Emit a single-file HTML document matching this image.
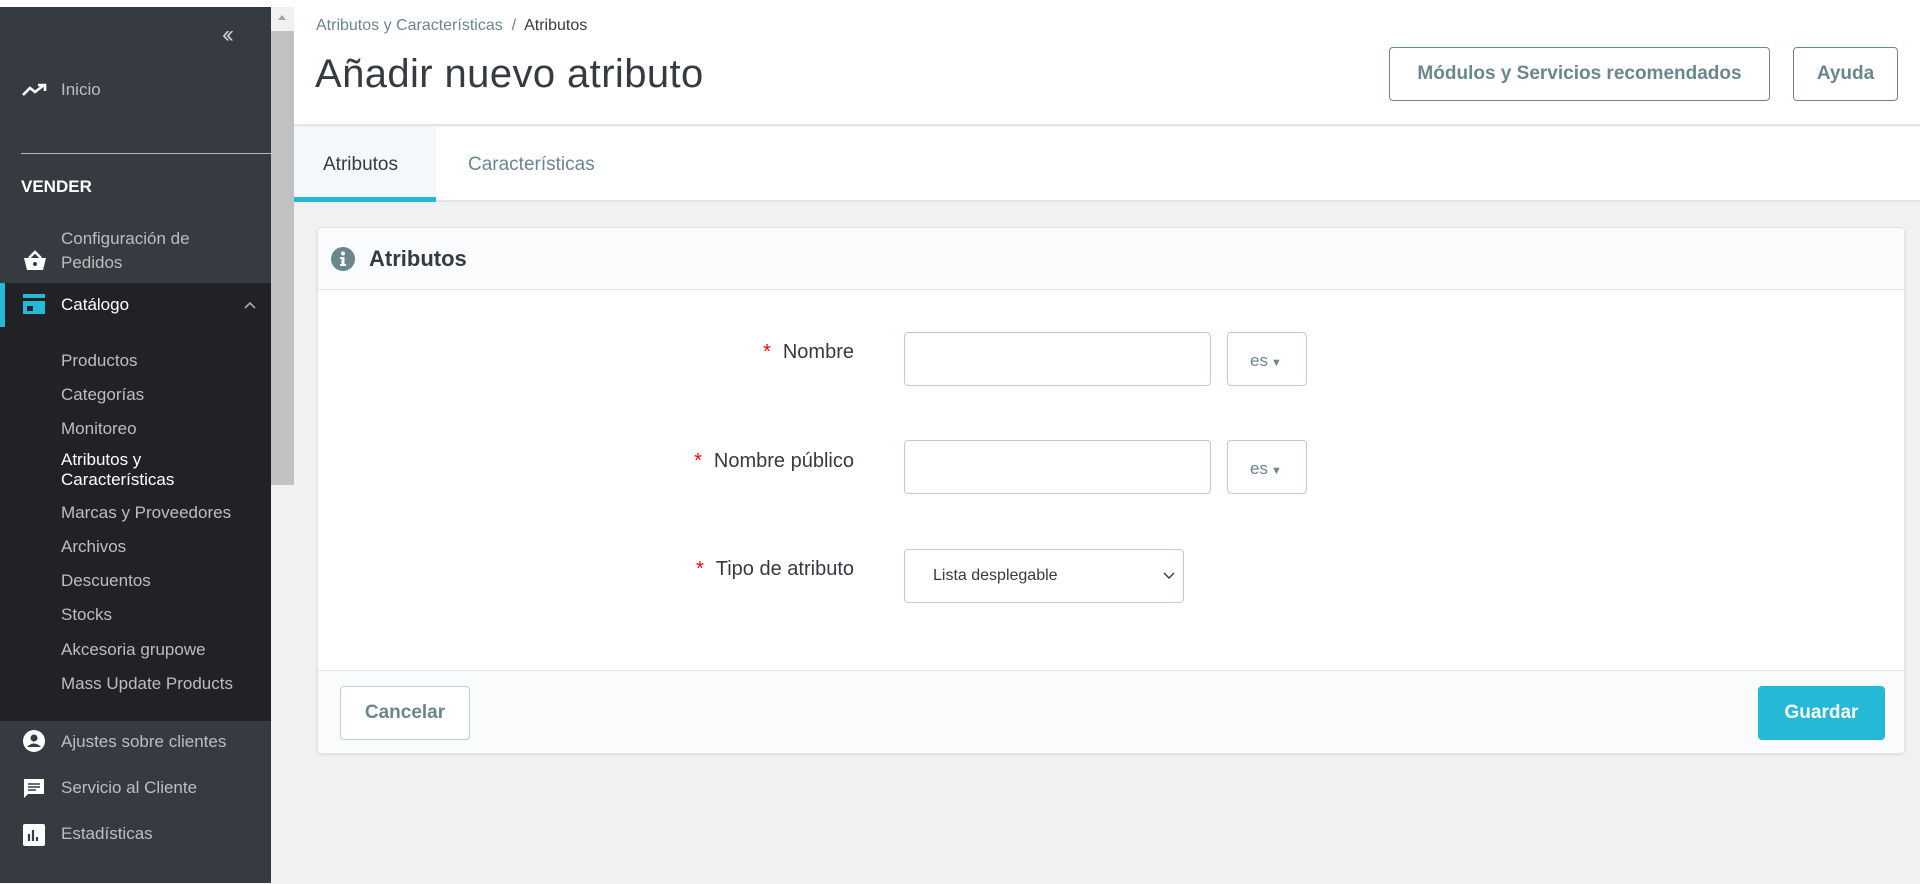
<!DOCTYPE html>
<html><head><meta charset="utf-8"><style>
*{box-sizing:border-box;margin:0;padding:0}
body{width:1920px;height:884px;overflow:hidden;background:#eff1f2;font-family:"Liberation Sans",sans-serif;position:relative}
.abs{position:absolute}
#sb{left:0;top:7px;width:271px;height:876px;background:#363a41;color:#bebebe;font-size:17px}
#sb .t{position:absolute;left:61px;white-space:nowrap}
#scroll{left:271px;top:7px;width:23px;height:877px;background:#f1f1f1}
#main{left:294px;top:0;width:1626px;height:884px}
.btn{position:absolute;border:1.5px solid #6c868e;border-radius:4px;color:#6c868e;font-size:19px;font-weight:bold;display:flex;align-items:center;justify-content:center;background:#fff;white-space:nowrap}
.inp{position:absolute;border:1.5px solid #bbcdd2;border-radius:4px;background:#fff}
.lbl{position:absolute;right:0;font-size:20px;color:#363a41;white-space:nowrap}
.lbl b{color:#f00;font-weight:normal;margin-right:12px}
</style></head><body>
<div class="abs" style="left:0;top:0;width:1920px;height:7px;background:#fff"></div>
<div class="abs" style="left:508px;top:-20px;width:343px;height:26px;border:1px solid #ccc;border-radius:13px;background:#fff"></div>
<div id="sb" class="abs">
 <div class="t" style="left:222px;top:14px;font-size:24px;color:#ccc;letter-spacing:-4px">‹‹</div>
 <svg class="abs" style="left:22px;top:76px" width="26" height="14" viewBox="0 0 26 14"><path d="M1 12 L8 5 L13 9 L22 2 M16 2 H23 V8" stroke="#fff" stroke-width="2.6" fill="none"/></svg>
 <div class="t" style="top:73px">Inicio</div>
 <div class="abs" style="left:21px;top:146px;width:250px;height:1px;background:#bbb"></div>
 <div class="t" style="left:21px;top:170px;color:#fff;font-weight:bold">VENDER</div>
 <div class="t" style="top:220px;line-height:24px">Configuración de<br>Pedidos</div>
 <svg class="abs" style="left:22px;top:243px" width="26" height="22" viewBox="0 0 26 22"><path d="M2 8 H24 L21 20 H5 Z" fill="#fff"/><path d="M7 8 L13 2 L19 8" stroke="#fff" stroke-width="2.5" fill="none"/><circle cx="13" cy="14" r="2" fill="#363a41"/></svg>
 <div class="abs" style="left:0;top:276px;width:271px;height:438px;background:#202226"></div>
 <div class="abs" style="left:0;top:276px;width:5px;height:44px;background:#25b9d7"></div>
 <svg class="abs" style="left:22px;top:286px" width="24" height="22" viewBox="0 0 24 22"><rect x="1" y="1" width="22" height="4" fill="#25b9d7"/><rect x="1" y="8" width="22" height="13" fill="#25b9d7"/><rect x="5" y="13" width="6" height="5" fill="#202226"/></svg>
 <div class="t" style="top:288px;color:#fff;font-size:17px">Catálogo</div>
 <svg class="abs" style="left:244px;top:294px" width="12" height="8" viewBox="0 0 12 8"><path d="M1 7 L6 2 L11 7" stroke="#aaa" stroke-width="1.6" fill="none"/></svg>
 <div class="t" style="top:344px">Productos</div>
 <div class="t" style="top:378px">Categorías</div>
 <div class="t" style="top:412px">Monitoreo</div>
 <div class="t" style="top:443px;color:#fff;line-height:20px">Atributos y<br>Características</div>
 <div class="t" style="top:496px">Marcas y Proveedores</div>
 <div class="t" style="top:530px">Archivos</div>
 <div class="t" style="top:564px">Descuentos</div>
 <div class="t" style="top:598px">Stocks</div>
 <div class="t" style="top:633px">Akcesoria grupowe</div>
 <div class="t" style="top:667px">Mass Update Products</div>
 <svg class="abs" style="left:22px;top:722px" width="24" height="24" viewBox="0 0 24 24"><circle cx="12" cy="12" r="11" fill="#fff"/><circle cx="12" cy="9" r="3.5" fill="#363a41"/><path d="M5 18 Q12 11 19 18" fill="#363a41"/></svg>
 <div class="t" style="top:725px">Ajustes sobre clientes</div>
 <svg class="abs" style="left:22px;top:770px" width="24" height="24" viewBox="0 0 24 24"><path d="M2 2 H22 V17 H6 L2 21 Z" fill="#fff"/><path d="M6 7 H18 M6 10 H18 M6 13 H14" stroke="#363a41" stroke-width="1.6"/></svg>
 <div class="t" style="top:771px">Servicio al Cliente</div>
 <svg class="abs" style="left:23px;top:817px" width="22" height="22" viewBox="0 0 22 22"><rect x="0" y="0" width="22" height="22" rx="2" fill="#fff"/><path d="M6 17 V10 M10 17 V6 M14 17 V13" stroke="#363a41" stroke-width="2.2"/></svg>
 <div class="t" style="top:817px">Estadísticas</div>
</div>
<div id="scroll" class="abs"><div class="abs" style="left:0;top:24px;width:23px;height:454px;background:#c1c1c1"></div><div class="abs" style="left:7px;top:8px;width:0;height:0;border:4px solid transparent;border-bottom:5px solid #a3a3a3;border-top:0"></div></div>
<div id="main" class="abs">
 <div class="abs" style="left:0;top:0;width:1626px;height:126px;background:#fff;border-bottom:2px solid #e4e6e8"></div>
 <div class="abs" style="left:22px;top:17px;font-size:16px;color:#6c868e">Atributos y Características &nbsp;/&nbsp; <span style="color:#363a41">Atributos</span></div>
 <div class="abs" style="left:21px;top:52px;font-size:40px;color:#363a41;letter-spacing:0.4px">Añadir nuevo atributo</div>
 <div class="btn" style="left:1095px;top:47px;width:381px;height:54px">Módulos y Servicios recomendados</div>
 <div class="btn" style="left:1499px;top:47px;width:105px;height:54px">Ayuda</div>
 <div class="abs" style="left:0;top:127px;width:1626px;height:75px;background:#fff;border-bottom:2px solid #e4e6e8"></div>
 <div class="abs" style="left:0;top:127px;width:142px;height:75px;background:#f4f8fa;border-bottom:5px solid #25b9d7"></div>
 <div class="abs" style="left:29px;top:154px;font-size:19px;color:#363a41">Atributos</div>
 <div class="abs" style="left:174px;top:154px;font-size:19px;color:#6c868e">Características</div>
 <div class="abs" style="left:23px;top:227px;width:1588px;height:527px;background:#fff;border:1px solid #dfe5e7;border-radius:5px;box-shadow:0 1px 2px rgba(0,0,0,.08);overflow:hidden">
  <div class="abs" style="left:0;top:0;width:100%;height:62px;background:#fafbfc;border-bottom:1px solid #dbe6e9"></div>
  <svg class="abs" style="left:13px;top:19px" width="24" height="24" viewBox="0 0 24 24"><circle cx="12" cy="12" r="12" fill="#6c868e"/><circle cx="12" cy="6.5" r="2" fill="#fff"/><path d="M9 10 H13.5 V17 H15 V19 H9 V17 H10.5 V12 H9 Z" fill="#fff"/></svg>
  <div class="abs" style="left:51px;top:18px;font-size:22px;color:#363a41;font-weight:bold">Atributos</div>
  <div class="abs" style="left:0;top:442px;width:100%;height:85px;background:#fafbfc;border-top:1px solid #e4e9eb"></div>
  <div class="btn" style="left:22px;top:458px;width:130px;height:54px;border-color:#bbcdd2">Cancelar</div>
  <div class="btn" style="left:1440px;top:458px;width:127px;height:54px;background:#25b9d7;border-color:#25b9d7;color:#fff">Guardar</div>
  <div class="abs" style="left:0;top:113px;width:536px"><div class="lbl"><b>*</b>Nombre</div></div>
  <div class="abs" style="left:0;top:222px;width:536px"><div class="lbl"><b>*</b>Nombre público</div></div>
  <div class="abs" style="left:0;top:330px;width:536px"><div class="lbl"><b>*</b>Tipo de atributo</div></div>
  <div class="inp" style="left:586px;top:104px;width:307px;height:54px"></div>
  <div class="inp" style="left:909px;top:104px;width:80px;height:54px;color:#6c868e;font-size:17px;padding:18px 0 0 22px">es<span style="font-size:11px;margin-left:3px">▼</span></div>
  <div class="inp" style="left:586px;top:212px;width:307px;height:54px"></div>
  <div class="inp" style="left:909px;top:212px;width:80px;height:54px;color:#6c868e;font-size:17px;padding:18px 0 0 22px">es<span style="font-size:11px;margin-left:3px">▼</span></div>
  <div class="inp" style="left:586px;top:321px;width:280px;height:54px;font-size:16px;color:#363a41;padding:17px 0 0 28px">Lista desplegable
   <svg class="abs" style="left:258px;top:22px" width="12" height="8" viewBox="0 0 12 8"><path d="M1 1 L6 6 L11 1" stroke="#363a41" stroke-width="1.4" fill="none"/></svg></div>
 </div>
</div>
</body></html>
